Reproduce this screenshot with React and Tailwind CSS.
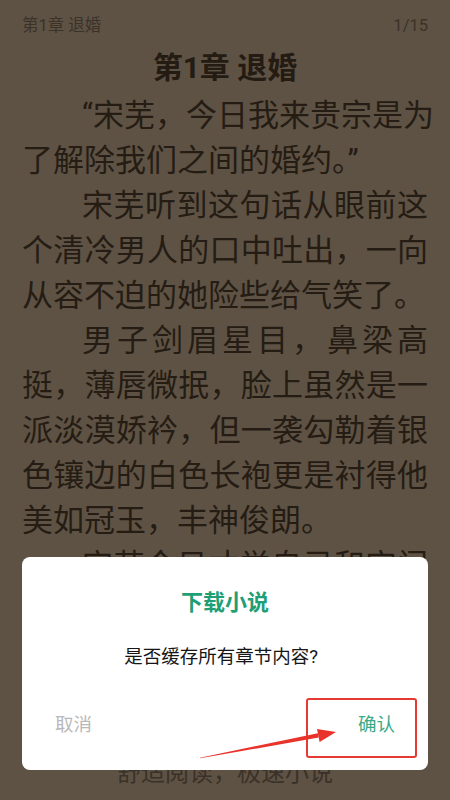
import React from "react";

const Line = ({ children, indent = false, justify = true }) => (
  <div
    className={`h-[45px] leading-[45px] whitespace-nowrap ${indent ? "pl-[60px]" : ""} ${
      justify ? "text-justify [text-align-last:justify]" : "text-left"
    }`}
  >
    {children}
  </div>
);

export default function App() {
  return (
    <div className="relative w-[450px] h-[800px] overflow-hidden bg-[#5e5244] font-['Roboto','Noto_Sans_CJK_SC',sans-serif]">
      {/* header */}
      <div className="flex justify-between px-[22px] pt-[15px] text-[16.5px] leading-[21px] text-[#3b3228]">
        <span>第1章 退婚</span>
        <span>1/15</span>
      </div>

      {/* title */}
      <h1 className="mt-[12px] text-center text-[30px] leading-[40px] font-bold text-[#241b12]">
        第1章 退婚
      </h1>

      {/* body */}
      <div className="mt-[5px] px-[22px] text-[31px] text-[#251c13]">
        <Line indent>“宋芜，今日我来贵宗是为</Line>
        <Line justify={false}>了解除我们之间的婚约。”</Line>
        <Line indent>宋芜听到这句话从眼前这</Line>
        <Line>个清冷男人的口中吐出，一向</Line>
        <Line justify={false}>从容不迫的她险些给气笑了。</Line>
        <Line indent>男子剑眉星目，鼻梁高</Line>
        <Line>挺，薄唇微抿，脸上虽然是一</Line>
        <Line>派淡漠娇衿，但一袭勾勒着银</Line>
        <Line>色镶边的白色长袍更是衬得他</Line>
        <Line justify={false}>美如冠玉，丰神俊朗。</Line>
        <Line indent>宋芜今日才觉自己和宋门</Line>
      </div>

      {/* footer slogan */}
      <div className="absolute left-0 right-0 top-[758px] text-center text-[24px] leading-[30px] text-[#3a3128]">
        舒适阅读，极速小说
      </div>

      {/* dialog */}
      <div className="absolute left-[22px] top-[557px] w-[406px] h-[213px] rounded-[8px] bg-white flex flex-col">
        <div className="pt-[32px] text-center text-[22px] leading-[28px] font-bold text-[#1f9f76]">
          下载小说
        </div>
        <div className="mt-[27px] pr-[8px] text-center text-[18.5px] leading-[26px] text-[#161616]">
          是否缓存所有章节内容?
        </div>
        <div className="mt-[42px] flex justify-between px-[33px] text-[18.5px] leading-[26px]">
          <span className="text-[#b9b9b9]">取消</span>
          <span className="text-[#3aa986]">确认</span>
        </div>
      </div>

      {/* red highlight box */}
      <div className="absolute left-[306px] top-[698px] w-[111px] h-[60px] border-2 border-[#e53a33] rounded-[3px]" />

      {/* red arrow */}
      <svg className="absolute left-0 top-0 pointer-events-none" width="450" height="800" viewBox="0 0 450 800">
        <polygon
          points="200,757.7 200.1,758.3 318.7,737.6 317.9,733.2"
          fill="#e8322a"
        />
        <polygon points="336,732 319.6,742 317,729" fill="#e8322a" />
      </svg>
    </div>
  );
}
